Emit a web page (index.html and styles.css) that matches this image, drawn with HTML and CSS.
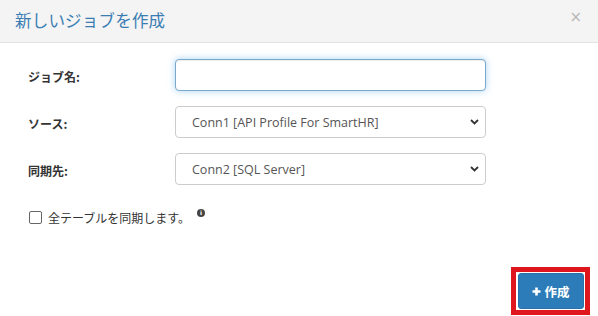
FILE: index.html
```html
<!DOCTYPE html>
<html lang="ja">
<head>
<meta charset="utf-8">
<link rel="stylesheet" href="styles.css">
</head>
<body>
<div class="modal">
  <div class="modal-header">
    <h4 class="modal-title">新しいジョブを作成</h4>
    <span class="close">×</span>
  </div>
  <div class="modal-body">
    <div class="form-grid">
      <label class="label">ジョブ名:</label>
      <input class="control focus" type="text">
      <label class="label">ソース:</label>
      <div class="select-wrap">
        <select class="control select"><option>Conn1 [API Profile For SmartHR]</option></select>
        <svg class="chev" width="9" height="6" viewBox="0 0 9 6"><path d="M1 1 L4.5 4.5 L8 1" fill="none" stroke="#333" stroke-width="1.8"/></svg>
      </div>
      <label class="label">同期先:</label>
      <div class="select-wrap">
        <select class="control select"><option>Conn2 [SQL Server]</option></select>
        <svg class="chev" width="9" height="6" viewBox="0 0 9 6"><path d="M1 1 L4.5 4.5 L8 1" fill="none" stroke="#333" stroke-width="1.8"/></svg>
      </div>
    </div>
    <div class="check-row">
      <span class="checkbox"></span>
      <span class="check-text">全テーブルを同期します。</span>
      <span class="info">i</span>
    </div>
  </div>
  <div class="modal-footer">
    <div class="highlight">
      <button class="btn"><svg class="plus" width="9" height="9" viewBox="0 0 9 9"><path d="M4.5 0.5 V8.5 M0.5 4.5 H8.5" stroke="#fff" stroke-width="2.6"/></svg>作成</button>
    </div>
  </div>
</div>
</body>
</html>
```
FILE: styles.css
```css
html, body {
  margin: 0;
  padding: 0;
  background: #fff;
  font-family: "Open Sans", "Noto Sans CJK JP", sans-serif;
  color: #333;
}
.modal {
  width: 598px;
  height: 316px;
  display: flex;
  flex-direction: column;
}
.modal-header {
  height: 43px;
  box-sizing: border-box;
  background: #f4f4f4;
  border-bottom: 1px solid #e3e3e3;
  display: flex;
  align-items: center;
  justify-content: space-between;
  padding: 0 16px 2px 15px;
}
.modal-title {
  margin: 0;
  font-family: "Noto Sans CJK JP", sans-serif;
  font-weight: 400;
  font-size: 16.5px;
  color: #3a7db3;
  letter-spacing: 0.2px;
}
.close {
  font-family: "DejaVu Sans", sans-serif;
  font-size: 15px;
  color: #b8b8b8;
  margin-top: -6px;
}
.modal-body {
  padding: 16px 0 0 28px;
}
.form-grid {
  display: grid;
  grid-template-columns: 147px 311px;
  row-gap: 15px;
  align-items: center;
}
.label {
  font-family: "Noto Sans CJK JP", sans-serif;
  font-size: 12px;
  font-weight: 700;
  color: #333;
  padding-top: 2px;
}
.control {
  box-sizing: border-box;
  width: 311px;
  height: 32px;
  border: 1px solid #ccc;
  border-radius: 4px;
  background: #fff;
  font-family: "Open Sans", "Noto Sans CJK JP", sans-serif;
  font-size: 12.5px;
  color: #555;
  padding: 0 14px;
  margin: 0;
}
.focus {
  border-color: #79a9cd;
  box-shadow: inset 0 1px 1px rgba(0,0,0,.075), 0 0 7px rgba(102,175,233,.55);
  outline: none;
}
.select-wrap {
  position: relative;
  width: 311px;
  height: 32px;
}
.select {
  appearance: none;
  -webkit-appearance: none;
  padding-left: 16px;
}
.chev {
  position: absolute;
  right: 7px;
  top: 13px;
}
.check-row {
  display: flex;
  align-items: center;
  margin-top: 24px;
  margin-left: 1px;
  height: 16px;
}
.checkbox {
  width: 11px;
  height: 11px;
  border: 1px solid #666;
  border-radius: 2px;
  background: #fff;
}
.check-text {
  font-family: "Noto Sans CJK JP", sans-serif;
  font-size: 12px;
  color: #333;
  margin-left: 6px;
}
.info {
  width: 8px;
  height: 8px;
  border-radius: 50%;
  background: #444;
  color: #fff;
  font-family: "DejaVu Sans", sans-serif;
  font-weight: 700;
  font-size: 6px;
  line-height: 8px;
  text-align: center;
  margin-left: 7px;
  margin-top: -9px;
}
.modal-footer {
  flex: 1;
  display: flex;
  justify-content: flex-end;
  align-items: flex-start;
  padding: 42px 8px 0 0;
}
.highlight {
  border: 5px solid #e0161f;
  padding: 1px 1px 1px 2px;
}
.btn {
  width: 66px;
  height: 36px;
  border: 1px solid #2a6fa5;
  border-radius: 3px;
  background: #2b7cb8;
  color: #fff;
  font-family: "Noto Sans CJK JP", sans-serif;
  font-weight: 700;
  font-size: 12.5px;
  display: flex;
  align-items: center;
  justify-content: center;
  padding: 0;
  gap: 3px;
}
.plus {
  display: block;
}
```
